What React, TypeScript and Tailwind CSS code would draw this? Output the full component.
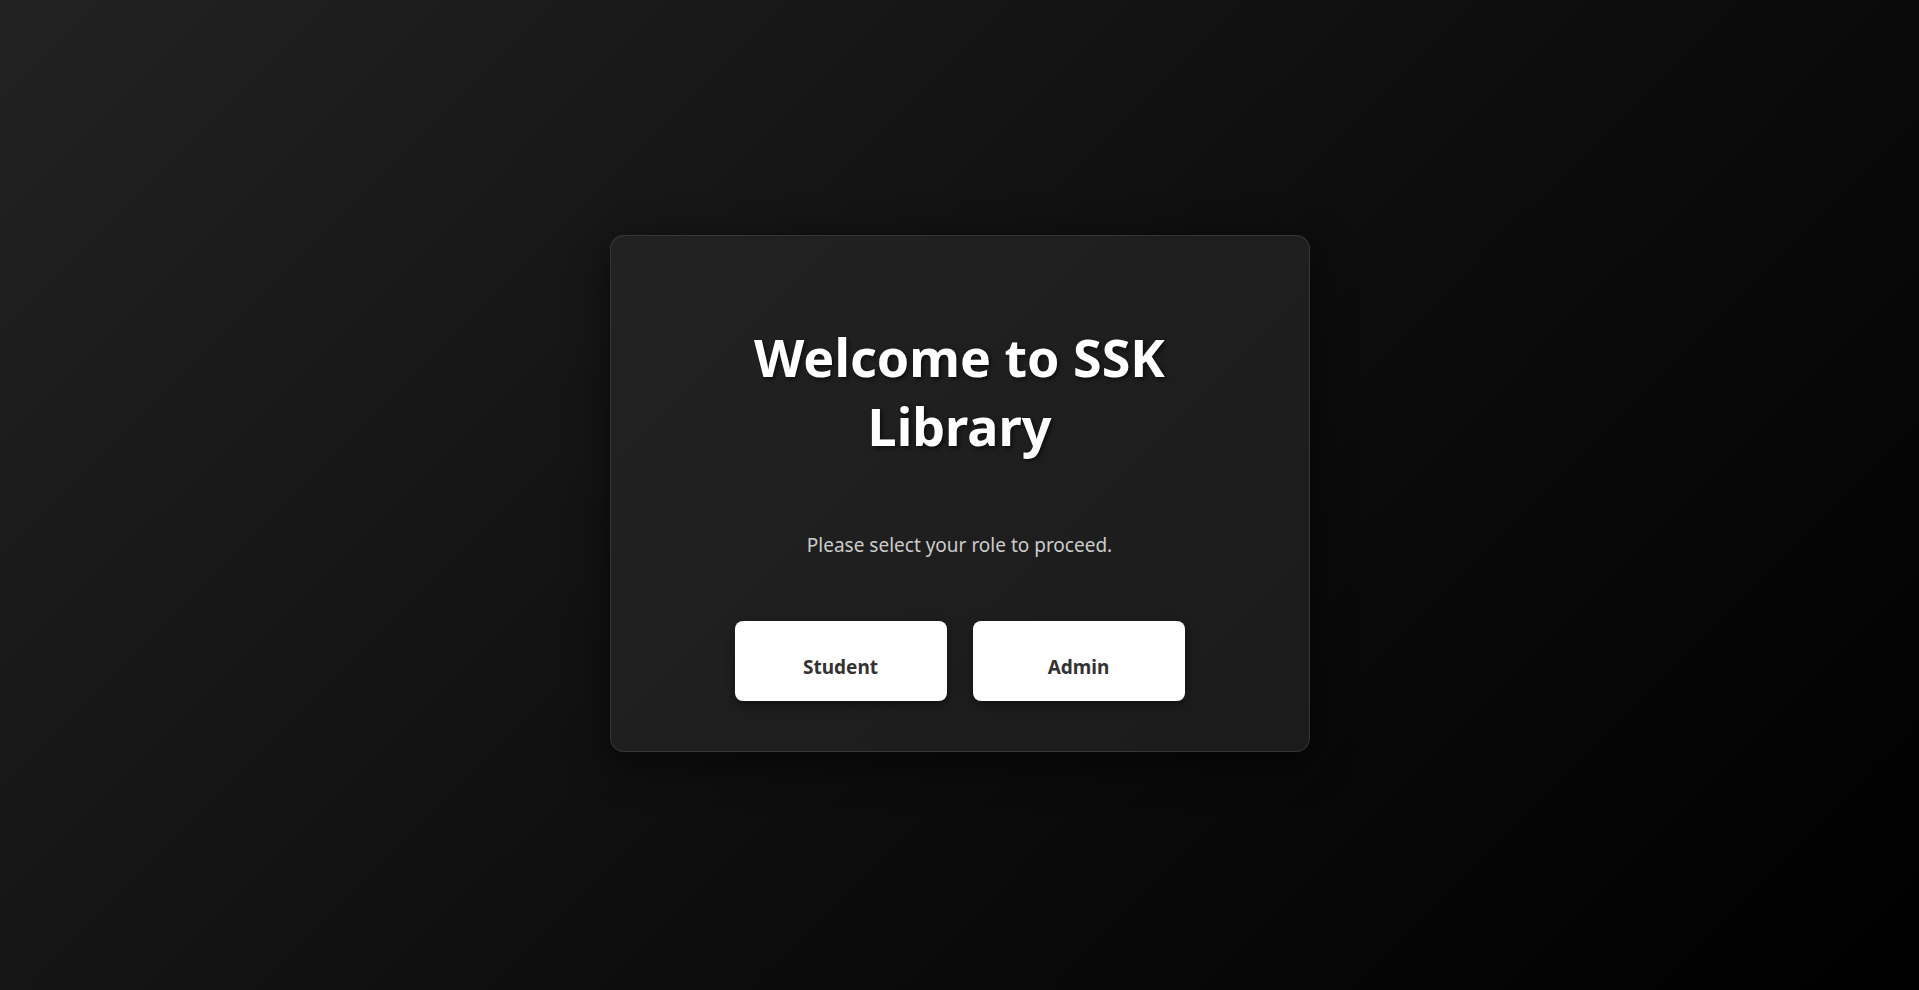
import React from "react";

export default function App() {
  return (
    <div className="flex h-[990px] w-full items-center justify-center bg-[linear-gradient(135deg,#222222_0%,#0d0d0d_55%,#000000_100%)] font-['Noto_Sans','Open_Sans',sans-serif]">
      <div className="mb-[4px] flex w-[700px] flex-col items-center rounded-[14px] border border-white/10 bg-[linear-gradient(135deg,#222222,#1b1b1b)] px-10 pb-[50px] pt-[86px] shadow-[0_10px_40px_rgba(0,0,0,0.6)]">
        <h1 className="text-center text-[52px] font-bold leading-[69px] text-white [text-shadow:2px_2px_4px_rgba(0,0,0,0.6)]">
          Welcome to SSK
          <br />
          Library
        </h1>
        <p className="mt-[71px] text-[19px] leading-[28px] text-[#cccccc]">Please select your role to proceed.</p>
        <div className="mt-[62px] flex gap-[26px]">
          <button className="h-20 w-[212px] rounded-lg bg-white pt-[14px] text-[19px] font-bold text-[#333333] shadow-[0_4px_12px_rgba(0,0,0,0.4)]">
            Student
          </button>
          <button className="h-20 w-[212px] rounded-lg bg-white pt-[14px] text-[19px] font-bold text-[#333333] shadow-[0_4px_12px_rgba(0,0,0,0.4)]">
            Admin
          </button>
        </div>
      </div>
    </div>
  );
}
